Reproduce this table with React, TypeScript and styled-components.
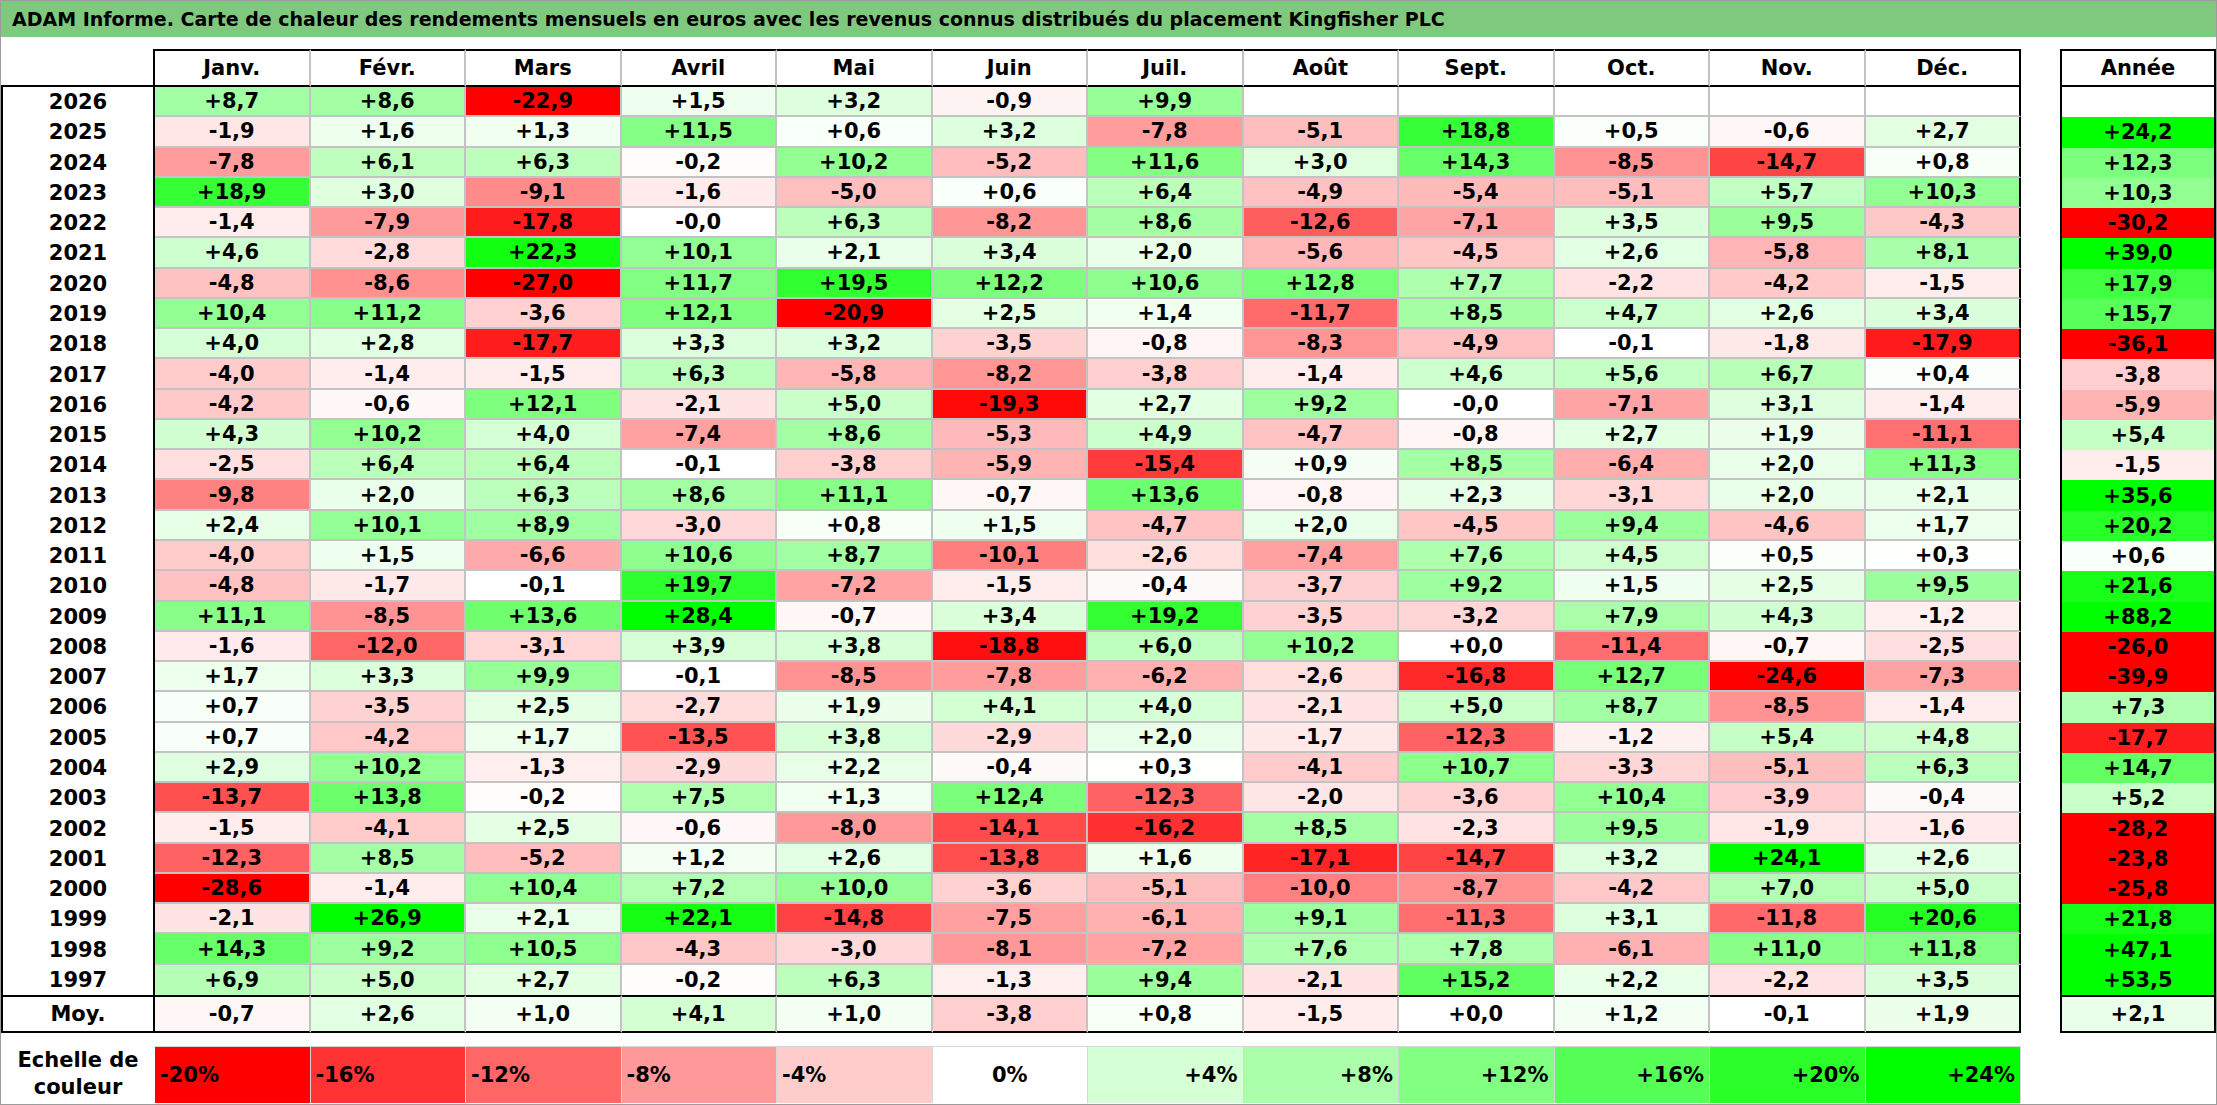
import React from 'react';
import styled, { createGlobalStyle } from 'styled-components';

const GlobalStyle = createGlobalStyle`
  html, body { margin: 0; padding: 0; background: #ffffff; }
  body { font-family: "DejaVu Sans", "Liberation Sans", sans-serif; color: #000; }
  *, *::before, *::after { box-sizing: border-box; }
`;

const MONTHS = ['Janv.', 'Févr.', 'Mars', 'Avril', 'Mai', 'Juin', 'Juil.', 'Août', 'Sept.', 'Oct.', 'Nov.', 'Déc.'];

const RAW: [string, string, string][] = [
  ['2026', '+8,7 +8,6 -22,9 +1,5 +3,2 -0,9 +9,9', ''],
  ['2025', '-1,9 +1,6 +1,3 +11,5 +0,6 +3,2 -7,8 -5,1 +18,8 +0,5 -0,6 +2,7', '+24,2'],
  ['2024', '-7,8 +6,1 +6,3 -0,2 +10,2 -5,2 +11,6 +3,0 +14,3 -8,5 -14,7 +0,8', '+12,3'],
  ['2023', '+18,9 +3,0 -9,1 -1,6 -5,0 +0,6 +6,4 -4,9 -5,4 -5,1 +5,7 +10,3', '+10,3'],
  ['2022', '-1,4 -7,9 -17,8 -0,0 +6,3 -8,2 +8,6 -12,6 -7,1 +3,5 +9,5 -4,3', '-30,2'],
  ['2021', '+4,6 -2,8 +22,3 +10,1 +2,1 +3,4 +2,0 -5,6 -4,5 +2,6 -5,8 +8,1', '+39,0'],
  ['2020', '-4,8 -8,6 -27,0 +11,7 +19,5 +12,2 +10,6 +12,8 +7,7 -2,2 -4,2 -1,5', '+17,9'],
  ['2019', '+10,4 +11,2 -3,6 +12,1 -20,9 +2,5 +1,4 -11,7 +8,5 +4,7 +2,6 +3,4', '+15,7'],
  ['2018', '+4,0 +2,8 -17,7 +3,3 +3,2 -3,5 -0,8 -8,3 -4,9 -0,1 -1,8 -17,9', '-36,1'],
  ['2017', '-4,0 -1,4 -1,5 +6,3 -5,8 -8,2 -3,8 -1,4 +4,6 +5,6 +6,7 +0,4', '-3,8'],
  ['2016', '-4,2 -0,6 +12,1 -2,1 +5,0 -19,3 +2,7 +9,2 -0,0 -7,1 +3,1 -1,4', '-5,9'],
  ['2015', '+4,3 +10,2 +4,0 -7,4 +8,6 -5,3 +4,9 -4,7 -0,8 +2,7 +1,9 -11,1', '+5,4'],
  ['2014', '-2,5 +6,4 +6,4 -0,1 -3,8 -5,9 -15,4 +0,9 +8,5 -6,4 +2,0 +11,3', '-1,5'],
  ['2013', '-9,8 +2,0 +6,3 +8,6 +11,1 -0,7 +13,6 -0,8 +2,3 -3,1 +2,0 +2,1', '+35,6'],
  ['2012', '+2,4 +10,1 +8,9 -3,0 +0,8 +1,5 -4,7 +2,0 -4,5 +9,4 -4,6 +1,7', '+20,2'],
  ['2011', '-4,0 +1,5 -6,6 +10,6 +8,7 -10,1 -2,6 -7,4 +7,6 +4,5 +0,5 +0,3', '+0,6'],
  ['2010', '-4,8 -1,7 -0,1 +19,7 -7,2 -1,5 -0,4 -3,7 +9,2 +1,5 +2,5 +9,5', '+21,6'],
  ['2009', '+11,1 -8,5 +13,6 +28,4 -0,7 +3,4 +19,2 -3,5 -3,2 +7,9 +4,3 -1,2', '+88,2'],
  ['2008', '-1,6 -12,0 -3,1 +3,9 +3,8 -18,8 +6,0 +10,2 +0,0 -11,4 -0,7 -2,5', '-26,0'],
  ['2007', '+1,7 +3,3 +9,9 -0,1 -8,5 -7,8 -6,2 -2,6 -16,8 +12,7 -24,6 -7,3', '-39,9'],
  ['2006', '+0,7 -3,5 +2,5 -2,7 +1,9 +4,1 +4,0 -2,1 +5,0 +8,7 -8,5 -1,4', '+7,3'],
  ['2005', '+0,7 -4,2 +1,7 -13,5 +3,8 -2,9 +2,0 -1,7 -12,3 -1,2 +5,4 +4,8', '-17,7'],
  ['2004', '+2,9 +10,2 -1,3 -2,9 +2,2 -0,4 +0,3 -4,1 +10,7 -3,3 -5,1 +6,3', '+14,7'],
  ['2003', '-13,7 +13,8 -0,2 +7,5 +1,3 +12,4 -12,3 -2,0 -3,6 +10,4 -3,9 -0,4', '+5,2'],
  ['2002', '-1,5 -4,1 +2,5 -0,6 -8,0 -14,1 -16,2 +8,5 -2,3 +9,5 -1,9 -1,6', '-28,2'],
  ['2001', '-12,3 +8,5 -5,2 +1,2 +2,6 -13,8 +1,6 -17,1 -14,7 +3,2 +24,1 +2,6', '-23,8'],
  ['2000', '-28,6 -1,4 +10,4 +7,2 +10,0 -3,6 -5,1 -10,0 -8,7 -4,2 +7,0 +5,0', '-25,8'],
  ['1999', '-2,1 +26,9 +2,1 +22,1 -14,8 -7,5 -6,1 +9,1 -11,3 +3,1 -11,8 +20,6', '+21,8'],
  ['1998', '+14,3 +9,2 +10,5 -4,3 -3,0 -8,1 -7,2 +7,6 +7,8 -6,1 +11,0 +11,8', '+47,1'],
  ['1997', '+6,9 +5,0 +2,7 -0,2 +6,3 -1,3 +9,4 -2,1 +15,2 +2,2 -2,2 +3,5', '+53,5'],
];

const AVERAGE = '-0,7 +2,6 +1,0 +4,1 +1,0 -3,8 +0,8 -1,5 +0,0 +1,2 -0,1 +1,9'.split(' ');
const AVERAGE_TOTAL = '+2,1';

const ROWS = RAW.map(([year, months, total]) => {
  const vals = months.split(' ');
  while (vals.length < 12) vals.push('');
  return { year, vals, total };
});

const LEGEND = [-20, -16, -12, -8, -4, 0, 4, 8, 12, 16, 20, 24];

function heat(text: string | number): string {
  if (text === '') return '#ffffff';
  const v = typeof text === 'number' ? text : parseFloat(text.replace(',', '.'));
  if (!isFinite(v) || v === 0) return '#ffffff';
  if (v < 0) {
    const t = Math.min(-v / 20, 1);
    const c = Math.round(255 * (1 - t));
    return `rgb(255,${c},${c})`;
  }
  const t = Math.min(v / 24, 1);
  const c = Math.round(255 * (1 - t));
  return `rgb(${c},255,${c})`;
}

const BLACK = '#000000';
const GRID = '#c3c3c3';
const ROW_TEMPLATE = '38px repeat(30, 30.28px) 38px';
const CELL_FONT = '21px';

const Page = styled.div`
  width: 2217px;
  height: 1105px;
  border: 1px solid #9c9c9c;
  display: flex;
  flex-direction: column;
  background: #ffffff;
  overflow: hidden;
`;

const TitleBar = styled.div`
  height: 36px;
  flex: none;
  background: #7fc97f;
  display: flex;
  align-items: center;
  padding-left: 11px;
  font-size: 19px;
  font-weight: bold;
  white-space: nowrap;
`;

const Body = styled.div`
  display: flex;
  gap: 39px;
  margin-top: 12px;
`;

const Sheet = styled.div`
  display: grid;
  grid-template-columns: 154px repeat(12, 155.5px);
  grid-template-rows: ${ROW_TEMPLATE};
  width: 2020px;
`;

const cellText = `
  display: flex;
  align-items: center;
  justify-content: center;
  font-size: ${CELL_FONT};
  font-weight: bold;
  white-space: nowrap;
`;

const Corner = styled.div`
  border-right: 2px solid ${BLACK};
  border-bottom: 2px solid ${BLACK};
`;

const MonthHead = styled.div<{ $last?: boolean }>`
  ${cellText}
  border-top: 2px solid ${BLACK};
  border-bottom: 2px solid ${BLACK};
  border-right: 2px solid ${(p) => (p.$last ? BLACK : GRID)};
`;

const YearCell = styled.div<{ $avg?: boolean }>`
  ${cellText}
  border-left: 2px solid ${BLACK};
  border-right: 2px solid ${BLACK};
  border-top: ${(p) => (p.$avg ? `2px solid ${BLACK}` : 'none')};
  border-bottom: ${(p) => (p.$avg ? `2px solid ${BLACK}` : 'none')};
`;

const ValueCell = styled.div<{ $bg: string; $lastCol?: boolean; $lastRow?: boolean; $avg?: boolean }>`
  ${cellText}
  background: ${(p) => p.$bg};
  border-right: 2px solid ${(p) => (p.$lastCol ? BLACK : GRID)};
  border-bottom: ${(p) => (p.$avg ? `2px solid ${BLACK}` : p.$lastRow ? 'none' : `2px solid ${GRID}`)};
  border-top: ${(p) => (p.$avg ? `2px solid ${BLACK}` : 'none')};
`;

const AnnualColumn = styled.div`
  display: grid;
  grid-template-columns: 156px;
  grid-template-rows: ${ROW_TEMPLATE};
`;

const AnnualHead = styled.div`
  ${cellText}
  border: 2px solid ${BLACK};
`;

const AnnualCell = styled.div<{ $bg: string; $avg?: boolean }>`
  ${cellText}
  background: ${(p) => p.$bg};
  border-left: 2px solid ${BLACK};
  border-right: 2px solid ${BLACK};
  border-top: ${(p) => (p.$avg ? `2px solid ${BLACK}` : 'none')};
  border-bottom: ${(p) => (p.$avg ? `2px solid ${BLACK}` : 'none')};
`;

const Legend = styled.div`
  display: grid;
  grid-template-columns: 154px repeat(12, 155.5px);
  height: 57px;
  margin-top: 13px;
  width: 2020px;
`;

const LegendLabel = styled.div`
  display: flex;
  flex-direction: column;
  align-items: center;
  justify-content: center;
  font-size: ${CELL_FONT};
  font-weight: bold;
  line-height: 27px;
  text-align: center;
`;

const Swatch = styled.div<{ $bg: string; $align: 'flex-start' | 'center' | 'flex-end' }>`
  display: flex;
  align-items: center;
  justify-content: ${(p) => p.$align};
  padding: 0 5px;
  background: ${(p) => p.$bg};
  border-top: 1px solid #d6d6d6;
  border-right: 1px solid #d6d6d6;
  font-size: ${CELL_FONT};
  font-weight: bold;
  white-space: nowrap;
`;

function legendText(v: number): string {
  if (v > 0) return `+${v}%`;
  return `${v}%`;
}

export default function App() {
  const lastIndex = ROWS.length - 1;
  return (
    <>
      <GlobalStyle />
      <Page>
        <TitleBar>
          ADAM Informe. Carte de chaleur des rendements mensuels en euros avec les revenus connus distribués du placement Kingfisher PLC
        </TitleBar>
        <Body>
          <Sheet>
            <Corner />
            {MONTHS.map((m, i) => (
              <MonthHead key={m} $last={i === 11}>
                {m}
              </MonthHead>
            ))}
            {ROWS.map((row, r) => (
              <React.Fragment key={row.year}>
                <YearCell>{row.year}</YearCell>
                {row.vals.map((v, c) => (
                  <ValueCell key={c} $bg={heat(v)} $lastCol={c === 11} $lastRow={r === lastIndex}>
                    {v}
                  </ValueCell>
                ))}
              </React.Fragment>
            ))}
            <YearCell $avg>Moy.</YearCell>
            {AVERAGE.map((v, c) => (
              <ValueCell key={c} $bg={heat(v)} $lastCol={c === 11} $avg>
                {v}
              </ValueCell>
            ))}
          </Sheet>
          <AnnualColumn>
            <AnnualHead>Année</AnnualHead>
            {ROWS.map((row) => (
              <AnnualCell key={row.year} $bg={heat(row.total)}>
                {row.total}
              </AnnualCell>
            ))}
            <AnnualCell $bg={heat(AVERAGE_TOTAL)} $avg>
              {AVERAGE_TOTAL}
            </AnnualCell>
          </AnnualColumn>
        </Body>
        <Legend>
          <LegendLabel>
            <span>Echelle de</span>
            <span>couleur</span>
          </LegendLabel>
          {LEGEND.map((v) => (
            <Swatch
              key={v}
              $bg={heat(v)}
              $align={v < 0 ? 'flex-start' : v === 0 ? 'center' : 'flex-end'}
            >
              {legendText(v)}
            </Swatch>
          ))}
        </Legend>
      </Page>
    </>
  );
}
